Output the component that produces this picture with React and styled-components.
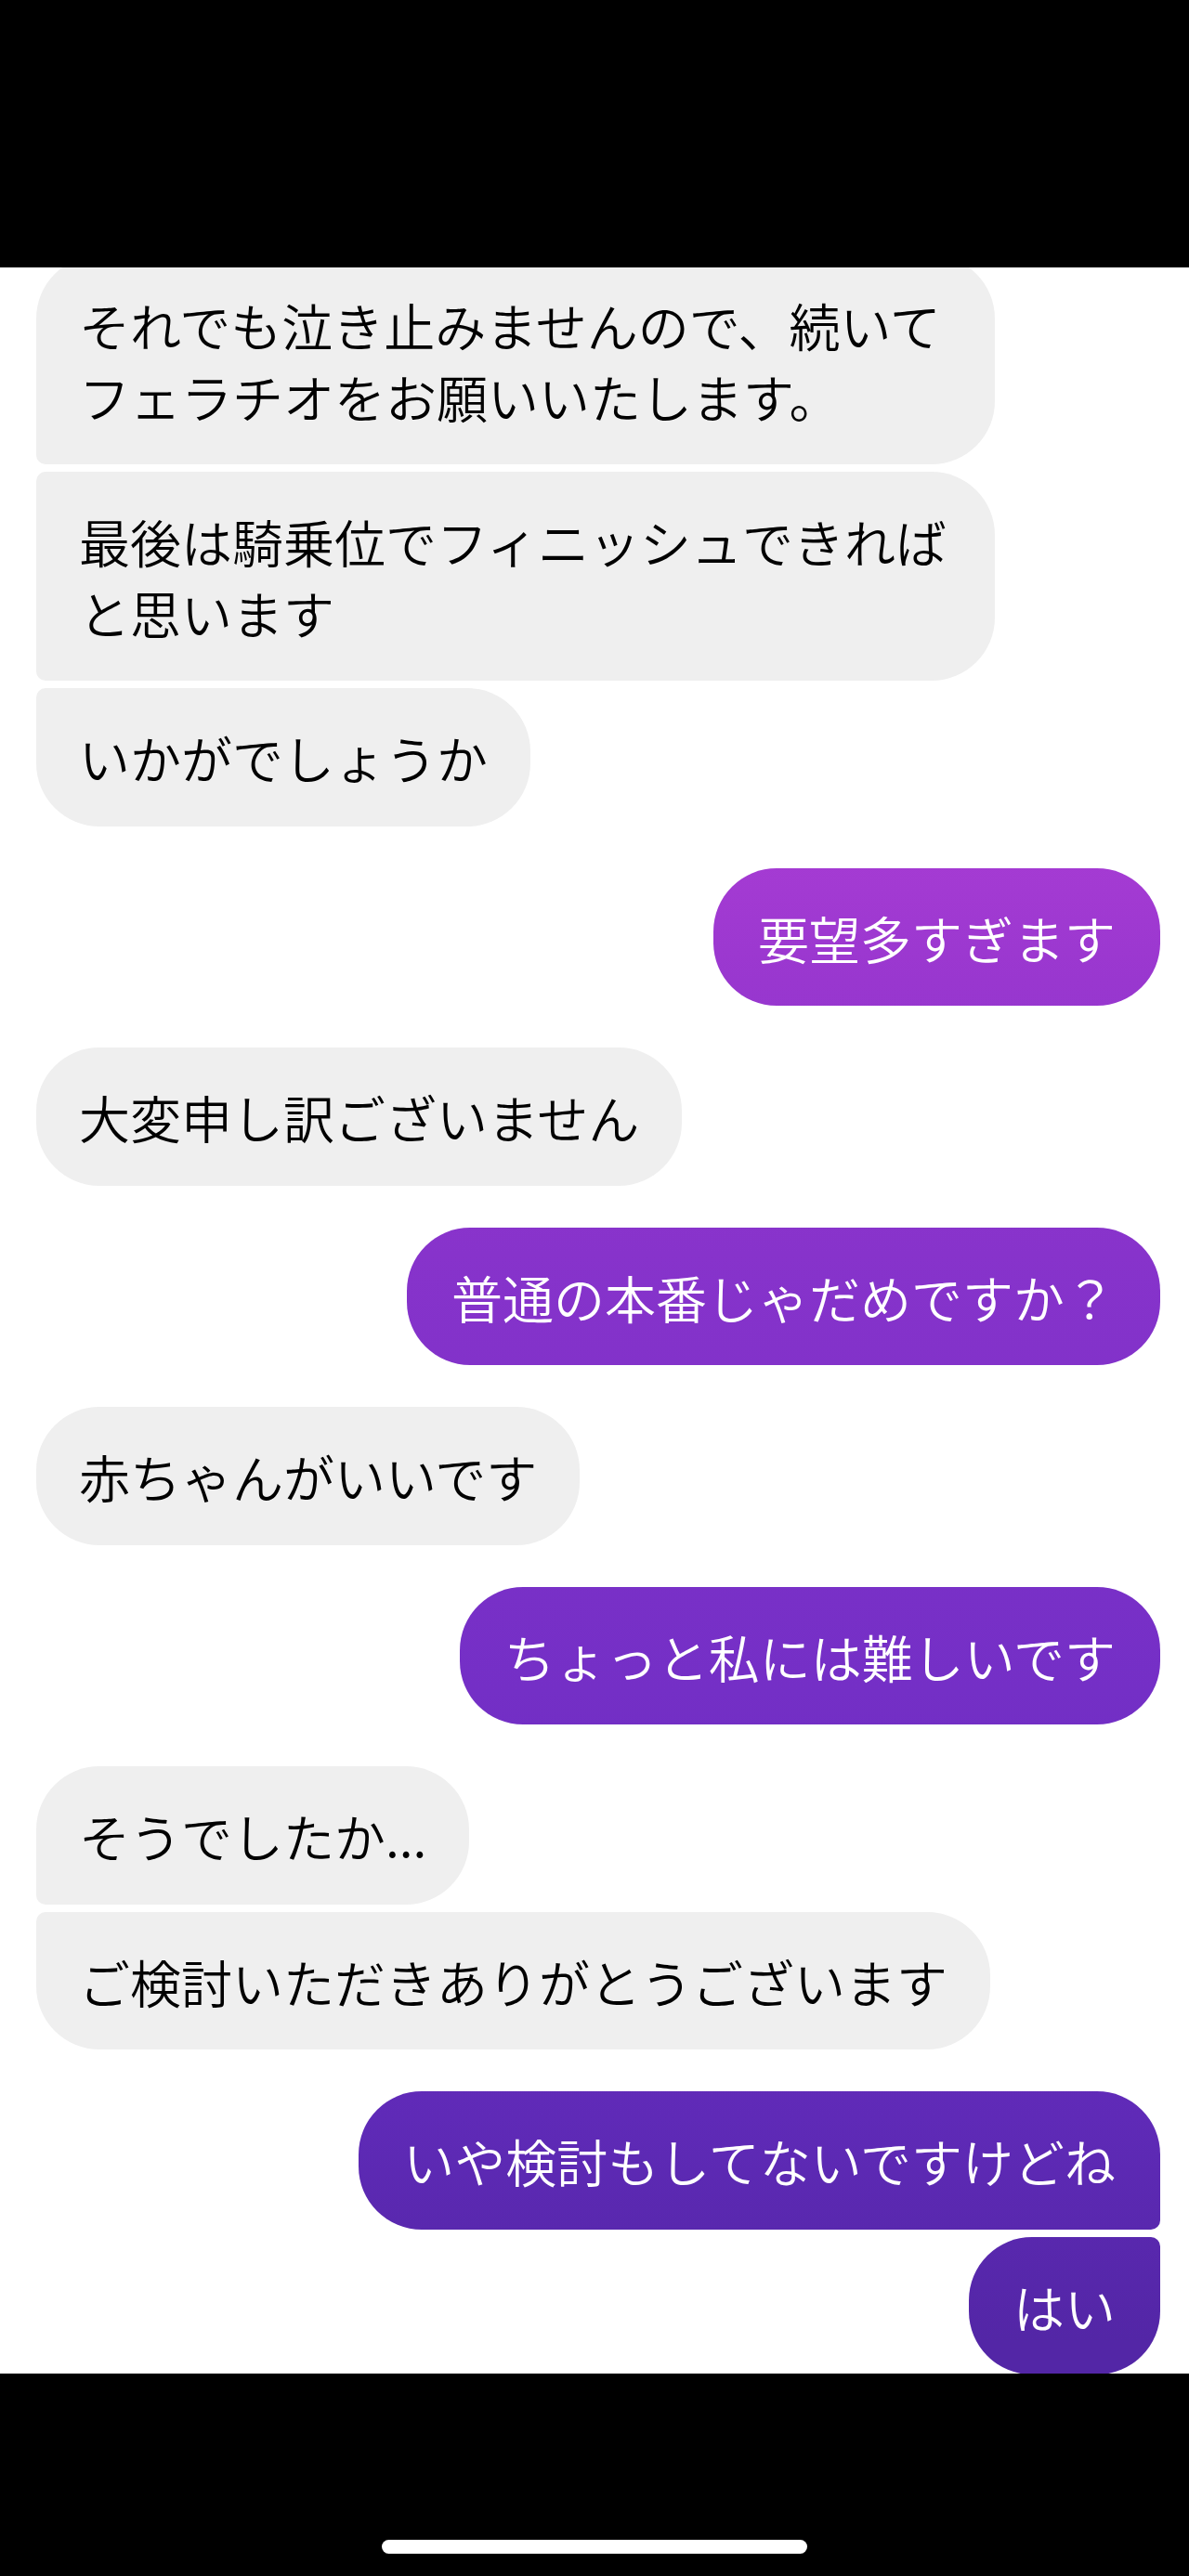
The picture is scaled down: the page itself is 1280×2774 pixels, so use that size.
import React from 'react';
import styled, { createGlobalStyle, css } from 'styled-components';

const GlobalStyle = createGlobalStyle`
  html, body {
    margin: 0;
    padding: 0;
    background: #000;
  }
  body {
    font-family: "Noto Sans CJK JP", "Noto Sans", sans-serif;
  }
`;

const BIG = '68px';
const SMALL = '10px';

const Screen = styled.div`
  width: 1280px;
  height: 2774px;
  display: flex;
  flex-direction: column;
  background: #000;
`;

const StatusArea = styled.div`
  height: 288px;
  flex: none;
  background: #000;
`;

const Thread = styled.div`
  flex: 1;
  background: #fff;
  overflow: hidden;
  padding: 0 31px 0 39px;
`;

const List = styled.div`
  display: flex;
  flex-direction: column;
  gap: 45px;
  margin-top: -13px;
`;

const Group = styled.div`
  display: flex;
  flex-direction: column;
  gap: 8px;
  align-items: ${(props) => (props.$mine ? 'flex-end' : 'flex-start')};
`;

// corner shape depends on where the bubble sits inside its group
const corners = (mine, pos) => {
  const top = pos === 'single' || pos === 'first' ? BIG : SMALL;
  const bottom = pos === 'single' || pos === 'last' ? BIG : SMALL;
  if (mine) {
    return css`
      border-radius: ${BIG} ${top} ${bottom} ${BIG};
    `;
  }
  return css`
    border-radius: ${top} ${BIG} ${BIG} ${bottom};
  `;
};

const Bubble = styled.div`
  max-width: 1032px;
  box-sizing: border-box;
  padding: 36px 46px;
  font-size: 55px;
  font-weight: 350;
  line-height: 76.5px;
  letter-spacing: 0;
  ${(props) => corners(props.$mine, props.$pos)}
  ${(props) =>
    props.$mine
      ? css`
          color: #fff;
          padding: 36px 48px;
          background-image: linear-gradient(
            to bottom,
            #a83cd4 880px,
            #a23ad2 960px,
            #9937cf 1055px,
            #8733cb 1350px,
            #742fc6 1820px,
            #5f2ab7 2280px,
            #5326a6 2520px
          );
          background-attachment: fixed;
        `
      : css`
          color: #000;
          background: #efefef;
        `}
`;

const HomeBar = styled.div`
  height: 218px;
  flex: none;
  background: #000;
  display: flex;
  justify-content: center;
  align-items: flex-end;
  padding-bottom: 24px;
  box-sizing: border-box;
`;

const HomeIndicator = styled.div`
  width: 458px;
  height: 15px;
  border-radius: 8px;
  background: #fff;
`;

const messages = [
  {
    mine: false,
    lines: [
      'それでも泣き止みませんので、続いてフェラチオをお願いいたします。',
      '最後は騎乗位でフィニッシュできればと思います',
      'いかがでしょうか',
    ],
  },
  { mine: true, lines: ['要望多すぎます'] },
  { mine: false, lines: ['大変申し訳ございません'] },
  { mine: true, lines: ['普通の本番じゃだめですか？'] },
  { mine: false, lines: ['赤ちゃんがいいです'] },
  { mine: true, lines: ['ちょっと私には難しいです'] },
  { mine: false, lines: ['そうでしたか...', 'ご検討いただきありがとうございます'] },
  { mine: true, lines: ['いや検討もしてないですけどね', 'はい'] },
];

const position = (i, n) => {
  if (n === 1) return 'single';
  if (i === 0) return 'first';
  if (i === n - 1) return 'last';
  return 'middle';
};

export default function App() {
  return (
    <>
      <GlobalStyle />
      <Screen>
        <StatusArea />
        <Thread>
          <List>
            {messages.map((group, g) => (
              <Group key={g} $mine={group.mine}>
                {group.lines.map((text, i) => (
                  <Bubble
                    key={i}
                    $mine={group.mine}
                    $pos={position(i, group.lines.length)}
                  >
                    {text}
                  </Bubble>
                ))}
              </Group>
            ))}
          </List>
        </Thread>
        <HomeBar>
          <HomeIndicator />
        </HomeBar>
      </Screen>
    </>
  );
}
